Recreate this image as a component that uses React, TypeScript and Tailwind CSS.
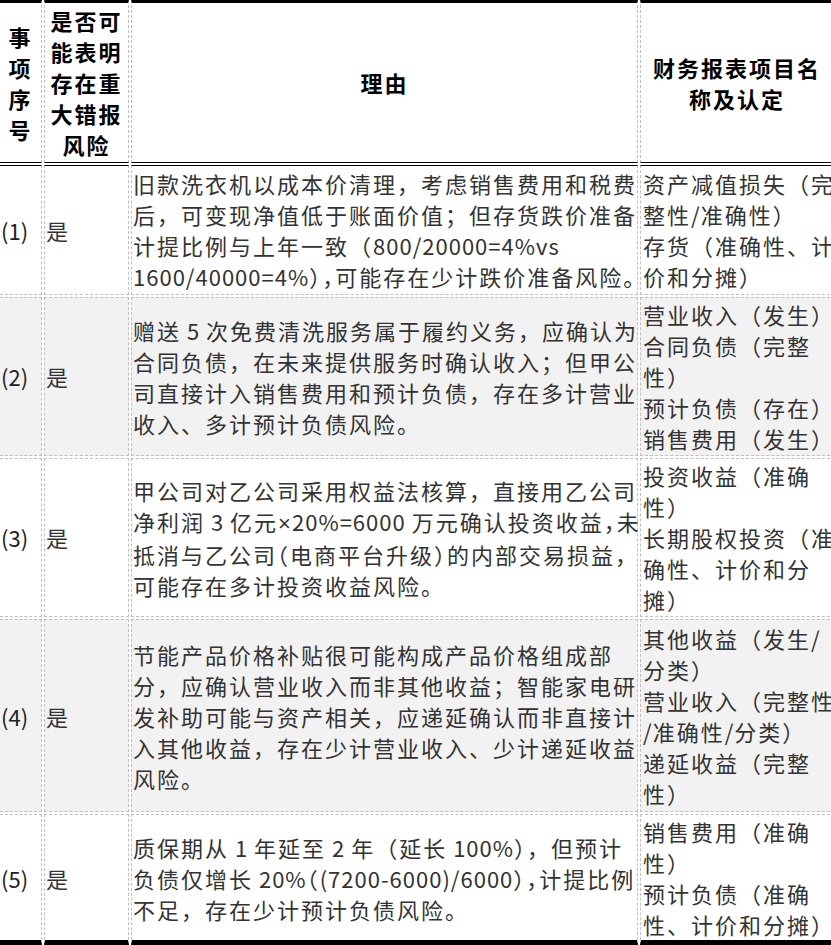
import React from "react";

type Line = { t: string; j?: boolean };

type Row = {
  no: string;
  yes: string;
  shade: boolean;
  pad: string;
  reason: Line[];
  items: string[];
};

// {x} marks a full-width mark that is set half-width, as Word compresses it
const rows: Row[] = [
  {
    no: "(1)",
    yes: "是",
    shade: false,
    pad: "py-[2px]",
    reason: [
      { t: "旧款洗衣机以成本价清理，考虑销售费用和税费", j: true },
      { t: "后，可变现净值低于账面价值；但存货跌价准备", j: true },
      { t: "计提比例与上年一致（800/20000=4%vs" },
      { t: "1600/40000=4%{）}{，}可能存在少计跌价准备风险。", j: true },
    ],
    items: ["资产减值损失（完", "整性/准确性）", "存货（准确性、计", "价和分摊）"],
  },
  {
    no: "(2)",
    yes: "是",
    shade: true,
    pad: "py-[1px]",
    reason: [
      { t: "赠送 5 次免费清洗服务属于履约义务，应确认为", j: true },
      { t: "合同负债，在未来提供服务时确认收入；但甲公", j: true },
      { t: "司直接计入销售费用和预计负债，存在多计营业", j: true },
      { t: "收入、多计预计负债风险。" },
    ],
    items: ["营业收入（发生）", "合同负债（完整", "性）", "预计负债（存在）", "销售费用（发生）"],
  },
  {
    no: "(3)",
    yes: "是",
    shade: false,
    pad: "py-[1px]",
    reason: [
      { t: "甲公司对乙公司采用权益法核算，直接用乙公司", j: true },
      { t: "净利润 3 亿元×20%=6000 万元确认投资收益{，}未", j: true },
      { t: "抵消与乙公司{（}电商平台升级{）}的内部交易损益，", j: true },
      { t: "可能存在多计投资收益风险。" },
    ],
    items: ["投资收益（准确", "性）", "长期股权投资（准", "确性、计价和分", "摊）"],
  },
  {
    no: "(4)",
    yes: "是",
    shade: true,
    pad: "pt-[3px] pb-[2px]",
    reason: [
      { t: "节能产品价格补贴很可能构成产品价格组成部" },
      { t: "分，应确认营业收入而非其他收益；智能家电研", j: true },
      { t: "发补助可能与资产相关，应递延确认而非直接计", j: true },
      { t: "入其他收益，存在少计营业收入、少计递延收益", j: true },
      { t: "风险。" },
    ],
    items: ["其他收益（发生/", "分类）", "营业收入（完整性", "/准确性/分类）", "递延收益（完整", "性）"],
  },
  {
    no: "(5)",
    yes: "是",
    shade: false,
    pad: "pt-[1px] pb-0",
    reason: [
      { t: "质保期从 1 年延至 2 年（延长 100%），但预计" },
      { t: "负债仅增长 20%{（}(7200-6000)/6000{）}{，}计提比例" },
      { t: "不足，存在少计预计负债风险。" },
    ],
    items: ["销售费用（准确", "性）", "预计负债（准确", "性、计价和分摊）"],
  },
];

const LATIN = /^[\u0000-\u007A\u007C\u007E-\u024F]+$/;

// latin runs get a narrower letter spacing than the CJK text
function Runs({ text }: { text: string }) {
  const parts = text.split(/(\{[^{}]\}|[\u0000-\u007A\u007C\u007E-\u024F]+)/).filter(Boolean);
  return (
    <>
      {parts.map((p, i) => {
        if (/^\{[^{}]\}$/.test(p)) {
          return (
            <span key={i} className="[font-feature-settings:'halt']">
              {p[1]}
            </span>
          );
        }
        if (LATIN.test(p)) {
          return (
            <span key={i} className="tracking-[1px] whitespace-pre">
              {p.split(/(×)/).map((s, k) =>
                s === "×" ? (
                  <span key={k} className="font-['Liberation_Sans',sans-serif]">
                    ×
                  </span>
                ) : (
                  s
                )
              )}
            </span>
          );
        }
        return <span key={i}>{p}</span>;
      })}
    </>
  );
}

const cell = "border border-dashed border-[#bfbfbf] align-middle leading-[31px]";
const head =
  "border border-dashed border-[#bfbfbf] border-t-[3px] border-t-black [border-top-style:solid] border-b-black [border-bottom-style:solid] align-middle text-center font-bold text-black py-[2px] leading-[31px]";

export default function App() {
  return (
    <div className="w-[831px] h-[945px] overflow-hidden bg-white font-['Noto_Sans_CJK_SC',sans-serif] text-[22px] tracking-[2px] text-[#333]">
      <table className="table-fixed border-separate border-spacing-[2px] w-[844px] -ml-[2px] -mt-[2px]">
        <colgroup>
          <col className="w-[42px]" />
          <col className="w-[85px]" />
          <col className="w-[507px]" />
          <col className="w-[200px]" />
        </colgroup>
        <thead>
          <tr>
            <th className={`${head} border-l-0 px-[1px]`}>事项序号</th>
            <th className={`${head} px-[1px]`}>是否可能表明存在重大错报风险</th>
            <th className={`${head} px-[1px]`}>理由</th>
            <th className={`${head} pl-[2px] pr-[8px]`}>
              财务报表项目名
              <br />
              称及认定
            </th>
          </tr>
        </thead>
        <tbody>
          {rows.map((r, idx) => {
            const first = idx === 0;
            const last = idx === rows.length - 1;
            const edge = [
              first ? "border-t-black [border-top-style:solid]" : "",
              last ? "border-b-[5px] border-b-black [border-bottom-style:solid]" : "",
              r.shade ? "bg-[#f2f2f2]" : "bg-white",
              r.pad,
            ].join(" ");
            return (
              <tr key={r.no}>
                <td className={`${cell} ${edge} border-l-0 pl-[1px] pr-0 text-[#222] tracking-normal`}>
                  {r.no}
                </td>
                <td className={`${cell} ${edge} px-[1px]`}>{r.yes}</td>
                <td className={`${cell} ${edge} pl-[1px] pr-0`}>
                  {r.reason.map((l, i) => (
                    <div
                      key={i}
                      className={`whitespace-nowrap ${l.j ? "text-justify [text-align-last:justify]" : ""}`}
                    >
                      <Runs text={l.t} />
                    </div>
                  ))}
                </td>
                <td className={`${cell} ${edge} pl-[2px] pr-0`}>
                  {r.items.map((t, i) => (
                    <div key={i} className="whitespace-nowrap">
                      <Runs text={t} />
                    </div>
                  ))}
                </td>
              </tr>
            );
          })}
        </tbody>
      </table>
    </div>
  );
}
